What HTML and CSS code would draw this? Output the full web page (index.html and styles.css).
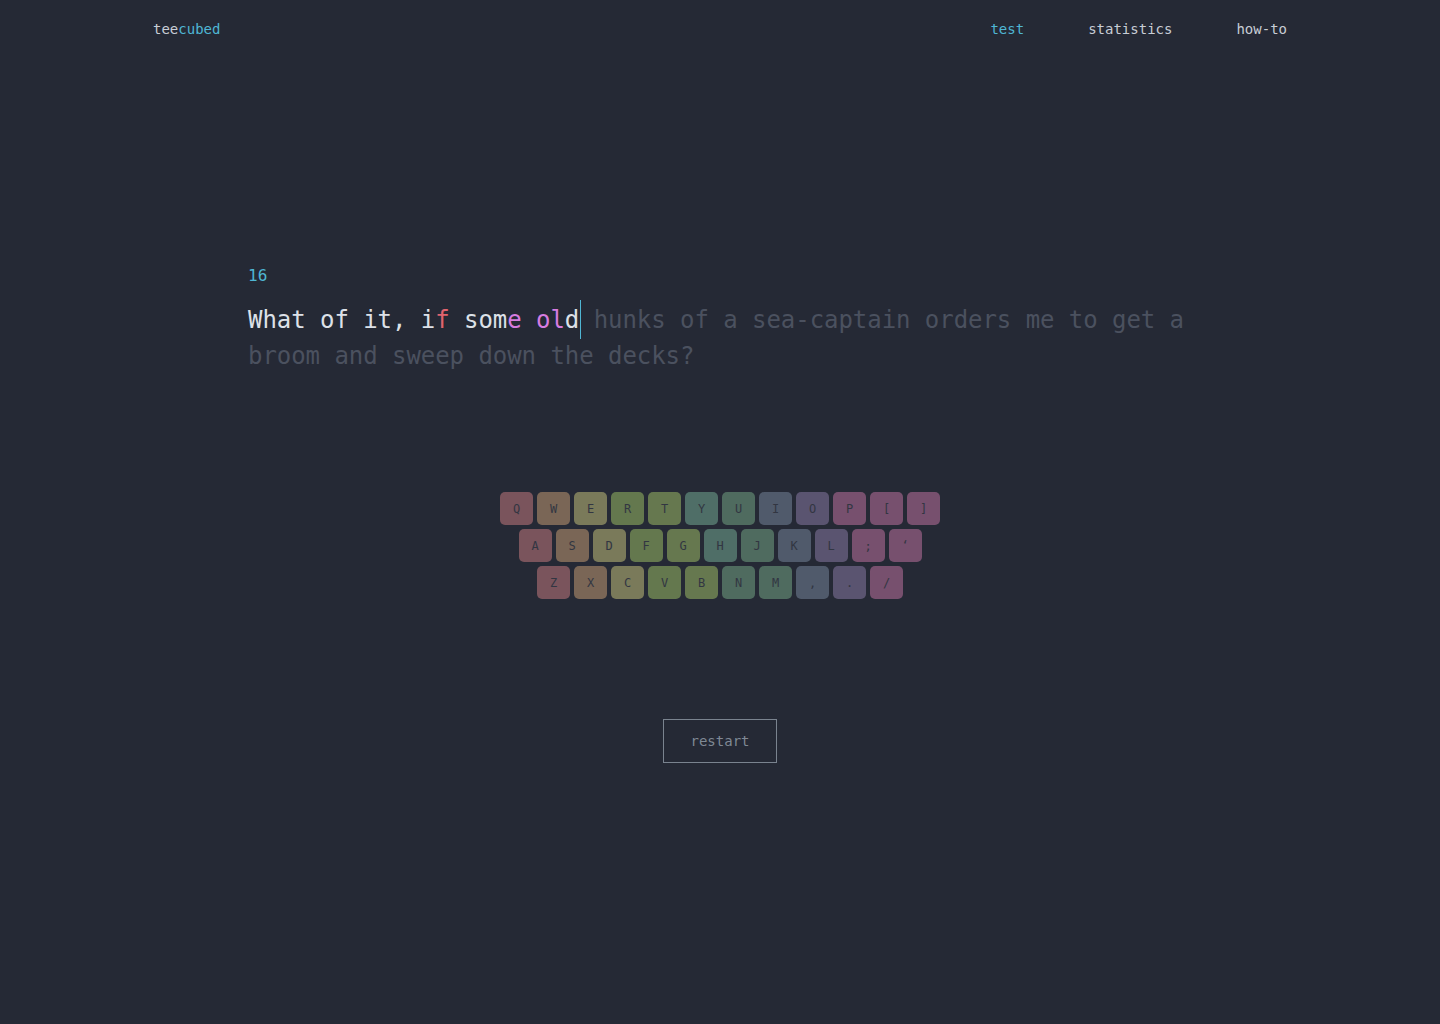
FILE: index.html
```html
<!DOCTYPE html>
<html lang="en">
<head>
<meta charset="utf-8">
<title>teecubed</title>
<link rel="stylesheet" href="styles.css">
</head>
<body>
<header class="header">
  <div class="logo"><span class="logo-tee">tee</span><span class="logo-cubed">cubed</span></div>
  <nav class="nav">
    <a class="nav-link active" href="#">test</a>
    <a class="nav-link" href="#">statistics</a>
    <a class="nav-link" href="#">how-to</a>
  </nav>
</header>
<main class="main">
  <section class="test">
    <div class="counter">16</div>
    <p class="words"><span class="ok">What of it, i</span><span class="bad">f</span><span class="ok"> som</span><span class="extra">e</span><span class="ok"> </span><span class="extra">ol</span><span class="ok">d</span><span class="caret-anchor"><span class="caret"></span></span><span class="todo"> hunks of a sea-captain orders me to get a broom and sweep down the decks?</span></p>
  </section>
  <section class="keyboard">
    <div class="kb-row">
      <span class="key c1">Q</span><span class="key c2">W</span><span class="key c3">E</span><span class="key c4">R</span><span class="key c5">T</span><span class="key c6">Y</span><span class="key c7">U</span><span class="key c8">I</span><span class="key c9">O</span><span class="key c10">P</span><span class="key c10">[</span><span class="key c10">]</span>
    </div>
    <div class="kb-row">
      <span class="key c1">A</span><span class="key c2">S</span><span class="key c3">D</span><span class="key c4">F</span><span class="key c5">G</span><span class="key c6">H</span><span class="key c7">J</span><span class="key c8">K</span><span class="key c9">L</span><span class="key c10">;</span><span class="key c10">‘</span>
    </div>
    <div class="kb-row">
      <span class="key c1">Z</span><span class="key c2">X</span><span class="key c3">C</span><span class="key c4">V</span><span class="key c5">B</span><span class="key c7">N</span><span class="key c7">M</span><span class="key c8">,</span><span class="key c9">.</span><span class="key c10">/</span>
    </div>
  </section>
  <div class="actions">
    <button class="restart" type="button">restart</button>
  </div>
</main>
</body>
</html>
```

FILE: styles.css
```css
html, body {
  margin: 0;
  padding: 0;
}

body {
  background: #252935;
  min-height: 1024px;
  font-family: "DejaVu Sans Mono", "Liberation Mono", monospace;
  color: #c8cdd6;
}

.header {
  width: 1134px;
  height: 58px;
  margin: 0 auto;
  display: flex;
  align-items: center;
  justify-content: space-between;
  font-size: 14px;
  line-height: 20px;
}

.logo-tee { color: #c8cdd6; }
.logo-cubed { color: #4fb6d4; }

.nav {
  display: flex;
  gap: 64px;
}

.nav-link {
  color: #c8cdd6;
  text-decoration: none;
}

.nav-link.active { color: #4fb6d4; }

.main {
  display: flex;
  flex-direction: column;
  align-items: center;
}

.test {
  width: 944px;
  margin-top: 206px;
}

.counter {
  color: #4fb6d4;
  font-size: 16px;
  line-height: 24px;
  margin-bottom: 14px;
}

.words {
  margin: 0;
  font-size: 24px;
  line-height: 36px;
  letter-spacing: -0.05px;
  white-space: pre-wrap;
}

.ok { color: #dde1e8; }
.bad { color: #e0646e; }
.extra { color: #d77ce0; }
.todo { color: #4b515f; }

.caret-anchor {
  position: relative;
  display: inline-block;
  width: 0;
  height: 36px;
  vertical-align: top;
}

.caret {
  position: absolute;
  left: 1px;
  top: -2px;
  width: 1px;
  height: 39px;
  background: #4fb6d4;
}

.keyboard {
  margin-top: 118px;
  display: flex;
  flex-direction: column;
  align-items: center;
  gap: 4px;
}

.kb-row {
  display: flex;
  gap: 4px;
}

.key {
  width: 33px;
  height: 33px;
  border-radius: 5px;
  display: flex;
  align-items: center;
  justify-content: center;
  font-size: 12px;
  color: #323642;
}

.c1 { background: #7a545c; }
.c2 { background: #7a6656; }
.c3 { background: #7a7a5a; }
.c4 { background: #64784e; }
.c5 { background: #66784f; }
.c6 { background: #4f6e67; }
.c7 { background: #4f6b5f; }
.c8 { background: #505a6b; }
.c9 { background: #5a5470; }
.c10 { background: #77506e; }

.actions {
  margin-top: 120px;
}

.restart {
  width: 114px;
  height: 44px;
  background: transparent;
  border: 1px solid #7a838f;
  color: #7f8894;
  font-family: "DejaVu Sans Mono", "Liberation Mono", monospace;
  font-size: 14px;
  padding: 0;
  cursor: pointer;
}
```
